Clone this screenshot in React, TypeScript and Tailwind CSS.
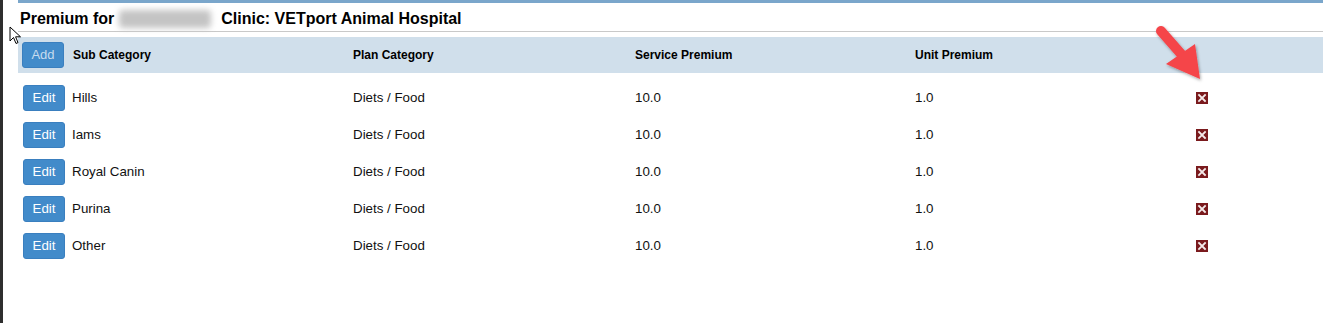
import React from "react";

const rows = [
  { name: "Hills" },
  { name: "Iams" },
  { name: "Royal Canin" },
  { name: "Purina" },
  { name: "Other" },
];

function DeleteIcon() {
  return (
    <svg width="12" height="12" viewBox="0 0 12 12" className="block">
      <rect x="0" y="0" width="12" height="12" fill="#7a1a1d" />
      <path d="M3 3 L9 9 M9 3 L3 9" stroke="#f4eaea" strokeWidth="1.8" strokeLinecap="square" />
    </svg>
  );
}

export default function App() {
  return (
    <div
      className="relative w-[1323px] h-[323px] bg-white flex overflow-hidden"
      style={{ fontFamily: '"Liberation Sans", Arial, sans-serif' }}
    >
      <div className="w-[3px] h-full bg-[#2e2e2e]" />
      <div className="w-[15px]" />
      <div className="flex-1 flex flex-col">
        <div className="h-[3px] bg-[#7aa6cb]" />
        <div className="h-[29px] border-b border-[#c9c9c9] flex items-center pl-[2px] pt-[3px] text-[16px] font-bold text-black leading-none">
          <span>Premium for</span>
          <span className="ml-[5px] w-[92px] h-[18px] bg-[#c4c4c4] blur-[3px] rounded-sm" />
          <span className="ml-[10px]">Clinic: VETport Animal Hospital</span>
        </div>
        <div className="h-[5px]" />
        <div className="h-[36px] bg-[#d0dfeb] flex items-center text-[12px] font-bold text-black">
          <div className="w-[335px] flex items-center pl-[4px]">
            <button className="w-[42px] h-[26px] rounded-[3px] bg-[#428bca] border border-[#3a7fbf] text-[#c7dbee] text-[13px] font-normal flex items-center justify-center">
              Add
            </button>
            <span className="ml-[9px]">Sub Category</span>
          </div>
          <div className="w-[282px]">Plan Category</div>
          <div className="w-[280px]">Service Premium</div>
          <div className="w-[281px]">Unit Premium</div>
        </div>
        <div className="pt-[6px] flex flex-col text-[13.33px] text-[#111]">
          {rows.map((r) => (
            <div key={r.name} className="h-[37px] flex items-center">
              <div className="w-[335px] flex items-center pl-[5px]">
                <button className="w-[42px] h-[26px] rounded-[3px] bg-[#428bca] border border-[#3a7fbf] text-white text-[13.33px] flex items-center justify-center">
                  Edit
                </button>
                <span className="ml-[7px]">{r.name}</span>
              </div>
              <div className="w-[282px]">Diets / Food</div>
              <div className="w-[280px]">10.0</div>
              <div className="w-[281px]">1.0</div>
              <div>
                <DeleteIcon />
              </div>
            </div>
          ))}
        </div>
      </div>

      {/* annotation arrow */}
      <svg
        className="absolute left-[1148px] top-[20px]"
        width="62"
        height="68"
        viewBox="1148 20 62 68"
      >
        <defs>
          <filter id="sh" x="-30%" y="-30%" width="160%" height="160%">
            <feDropShadow dx="1" dy="1.5" stdDeviation="1.5" floodColor="#000" floodOpacity="0.35" />
          </filter>
        </defs>
        <g filter="url(#sh)">
          <line x1="1161" y1="31" x2="1182" y2="55" stroke="#f5444a" strokeWidth="10" strokeLinecap="round" />
          <polygon points="1166,64 1195,44 1200,79" fill="#f5444a" />
        </g>
      </svg>

      {/* mouse cursor */}
      <svg className="absolute left-[9px] top-[26px]" width="14" height="20" viewBox="0 0 14 20">
        <path d="M1 1 L1 15 L4.5 11.5 L7 17.5 L9 16.6 L6.6 10.8 L11.5 10.8 Z" fill="#fff" stroke="#000" strokeWidth="1" strokeLinejoin="miter" />
      </svg>
    </div>
  );
}
